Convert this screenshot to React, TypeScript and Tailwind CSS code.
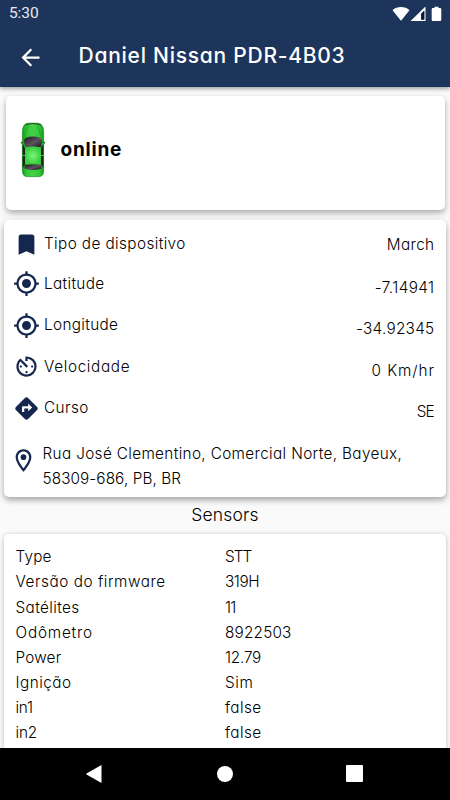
import React from "react";
import { MdArrowBack, MdAvTimer, MdBookmark, MdDirections, MdGpsFixed } from "react-icons/md";
import type { IconType } from "react-icons";

const details: {
  icon: IconType;
  label: string;
  value: string;
  row: string;
  labelTracking: string;
  valueTracking: string;
  valueOffset: string;
}[] = [
  { icon: MdBookmark, label: "Tipo de dispositivo", value: "March", row: "h-[38px]", labelTracking: "tracking-[0.4px]", valueTracking: "tracking-[0.4px]", valueOffset: "pt-[2px]" },
  { icon: MdGpsFixed, label: "Latitude", value: "-7.14941", row: "h-[41.5px]", labelTracking: "tracking-[0.35px]", valueTracking: "tracking-[0.4px]", valueOffset: "pt-[9px]" },
  { icon: MdGpsFixed, label: "Longitude", value: "-34.92345", row: "h-[41.5px]", labelTracking: "tracking-[0.35px]", valueTracking: "tracking-[0.3px]", valueOffset: "pt-[8px]" },
  { icon: MdAvTimer, label: "Velocidade", value: "0 Km/hr", row: "h-[41.5px]", labelTracking: "tracking-[0.65px]", valueTracking: "tracking-[0.95px] -mr-[0.5px]", valueOffset: "pt-[9px]" },
  { icon: MdDirections, label: "Curso", value: "SE", row: "h-[41.5px]", labelTracking: "tracking-[0.45px]", valueTracking: "tracking-[-1px] mr-px", valueOffset: "pt-[8px]" },
];

const sensors: { name: string; value: string; nameTracking: string; valueTracking: string }[] = [
  { name: "Type", value: "STT", nameTracking: "tracking-[0.2px]", valueTracking: "tracking-[-0.9px]" },
  { name: "Versão do firmware", value: "319H", nameTracking: "tracking-[0.55px]", valueTracking: "tracking-[-0.4px]" },
  { name: "Satélites", value: "11", nameTracking: "tracking-[0.4px]", valueTracking: "tracking-[-0.8px]" },
  { name: "Odômetro", value: "8922503", nameTracking: "tracking-[0.8px]", valueTracking: "tracking-[0.2px]" },
  { name: "Power", value: "12.79", nameTracking: "tracking-[0.2px]", valueTracking: "tracking-[-0.2px]" },
  { name: "Ignição", value: "Sim", nameTracking: "tracking-[0.5px]", valueTracking: "tracking-[0.6px]" },
  { name: "in1", value: "false", nameTracking: "tracking-[-0.2px]", valueTracking: "tracking-[0.4px]" },
  { name: "in2", value: "false", nameTracking: "tracking-[-0.1px]", valueTracking: "tracking-[0.4px]" },
];

function StatusBar() {
  return (
    <div className="flex h-[27px] items-center justify-between pl-[9px] pr-2">
      <span className="pt-px font-['Roboto',sans-serif] text-[15.500px] font-normal leading-none tracking-[-0.1px] text-white/90">
        5:30
      </span>
      <svg width="50" height="16" viewBox="0 0 50 16" fill="currentColor">
        <path d="M0.500 4.200C5 0 13 0 17.500 4.200L9 14.800Z" />
        <path fillRule="evenodd" d="M33.500 .5V15H18.600ZM32.500 4.500L29 8V13.800H32.500Z" />
        <path fill="#0c1440" d="M29.600 7.200L32 4.800V13.400H29.600Z" />
        <path d="M42.500 .8h4v1.200h1.600q1.200 0 1.200 1.200v10.600q0 1.200-1.200 1.200h-7.200q-1.200 0-1.200-1.200v-10.600q0-1.200 1.200-1.200h1.600z" />
      </svg>
    </div>
  );
}

function Pin() {
  return (
    <svg className="-ml-[3px] mt-[5.500px] text-[#15264f]" width="27" height="27" viewBox="0 0 24 24" fill="currentColor">
      <path d="M12 2C8.130 2 5 5.130 5 9c0 5.250 7 13 7 13s7-7.750 7-13c0-3.870-3.130-7-7-7zM7 9c0-2.760 2.240-5 5-5s5 2.240 5 5c0 2.880-2.880 7.190-5 9.880C9.920 16.210 7 11.850 7 9z" />
      <circle cx="12" cy="9" r="2.500" />
    </svg>
  );
}

function Car() {
  return (
    <svg width="26" height="56" viewBox="0 0 26 56">
      <defs>
        <linearGradient id="body" x1="0" x2="1" y1="0" y2="0">
          <stop offset="0" stopColor="#159a1c" />
          <stop offset=".2" stopColor="#35c83a" />
          <stop offset=".5" stopColor="#44d148" />
          <stop offset=".8" stopColor="#35c83a" />
          <stop offset="1" stopColor="#159a1c" />
        </linearGradient>
        <radialGradient id="roof">
          <stop offset="0" stopColor="#7bf57c" />
          <stop offset="1" stopColor="#37cf3d" />
        </radialGradient>
        <linearGradient id="glass" x1="0" x2="1" y1="0" y2="1">
          <stop offset="0" stopColor="#1c141c" />
          <stop offset=".55" stopColor="#5c545c" />
          <stop offset="1" stopColor="#151015" />
        </linearGradient>
      </defs>
      <path d="M3 19L.8 20.2v1.6L3 21zM23 19l2.2 1.2v1.6L23 21z" fill="#176e1b" />
      <path d="M2.400 10Q2.600 1.500 8 1.200h10q5.400.3 5.600 8.800v38q0 6.300-4 6.600H6.400q-4-.3-4-6.600z" fill="url(#body)" stroke="#128a18" strokeWidth=".7" />
      <path d="M5 3.300Q13-.2 21 3.300" fill="none" stroke="#174f19" strokeWidth="1" />
      <path d="M8 4L4.500 16M18 4L21.500 16" stroke="#1f9a26" strokeWidth=".8" />
      <path d="M2.600 22l2.600 4.500v15.500l-2.600 4zM23.400 22l-2.600 4.500v15.500l2.600 4z" fill="#1b251c" />
      <path d="M2.200 33.500h3.500M20.300 33.500h3.500" stroke="#35c83a" />
      <path d="M3.800 18.500Q5 14.500 13 14.500t9.200 4L20.800 25.500Q13 23.500 5.200 25.500z" fill="url(#glass)" />
      <path d="M5 25.500Q13 24 21 25.500V42.500H5z" fill="url(#roof)" />
      <path d="M4.800 42.700Q13 41.800 21.200 42.700L21.700 46.500Q13 49.500 4.300 46.500z" fill="url(#glass)" />
    </svg>
  );
}

export default function App() {
  return (
    <div className="flex h-[800px] w-[450px] flex-col overflow-hidden bg-[#fafafa] font-['Inter','Noto_Sans',sans-serif] text-[15.3px] font-light text-black [font-feature-settings:'cv11','calt'_0]">
      <header className="z-10 h-[87px] shrink-0 bg-[#1e355b] text-white shadow-[0_2px_4px_rgba(0,0,0,0.35)]">
        <StatusBar />
        <div className="flex h-[60px] items-center pl-[17px]">
          <MdArrowBack size={27} />
          <h1 className="ml-[34.500px] whitespace-nowrap pb-[3px] text-[21px] font-medium leading-none tracking-[0.75px]">
            Daniel Nissan PDR-4B03
          </h1>
        </div>
      </header>

      <main className="flex min-h-0 grow flex-col overflow-hidden">
        <section className="mx-[5.500px] mt-[8.500px] flex h-[114.500px] shrink-0 items-center rounded-[5px] bg-white pb-[6px] pl-[14px] shadow-[0_3px_6px_rgba(0,0,0,0.32)]">
          <Car />
          <span className="ml-[15px] text-[19px] font-bold leading-none tracking-[0.8px]">online</span>
        </section>

        <section className="mx-1 mt-[10px] flex h-[277px] shrink-0 flex-col rounded-[5px] bg-white pl-[9px] pr-[11.500px] pt-[5px] shadow-[0_3px_6px_rgba(0,0,0,0.35)]">
          {details.map(({ icon: Icon, label, value, row, labelTracking, valueTracking, valueOffset }) => (
            <div key={label} className={`flex items-center justify-between ${row}`}>
              <div className="flex items-center">
                <Icon size={27} className="text-[#15264f]" />
                <span className={`ml-[4px] whitespace-nowrap pt-px ${labelTracking}`}>{label}</span>
              </div>
              <span className={`whitespace-nowrap ${valueTracking} ${valueOffset}`}>{value}</span>
            </div>
          ))}
          <div className="mt-[12px] flex items-start">
            <Pin />
            <p className="ml-[5.500px] whitespace-nowrap leading-[25px]">
              <span className="tracking-[0.36px]">Rua José Clementino, Comercial Norte, Bayeux,</span>
              <br />
              <span className="tracking-[0.1px]">58309-686, PB, BR</span>
            </p>
          </div>
        </section>

        <h2 className="mt-[5px] h-[32px] shrink-0 text-center text-[17.500px] font-light leading-[26px] tracking-[0.2px]">
          Sensors
        </h2>

        <section className="mx-1 flex shrink-0 flex-col rounded-t-[5px] bg-white pl-[11.500px] pt-[11px] shadow-[0_1px_5px_rgba(0,0,0,0.25)]">
          {sensors.map(({ name, value, nameTracking, valueTracking }) => (
            <div key={name} className="grid h-[25.200px] grid-cols-[209.500px_1fr] items-center">
              <span className={`whitespace-nowrap ${nameTracking}`}>{name}</span>
              <span className={`whitespace-nowrap ${valueTracking}`}>{value}</span>
            </div>
          ))}
          <div className="h-4" />
        </section>
      </main>

      <nav className="z-10 flex h-[52.500px] shrink-0 items-center justify-center bg-black text-white">
        <svg className="mr-[115px]" width="16" height="18" viewBox="0 0 16 18" fill="currentColor">
          <path d="M15.500.5v17Q15.500 18 15 17.800L.5 9.500Q0 9 .5 8.500L15 .2q.5-.2.5.3z" />
        </svg>
        <span className="size-4 rounded-full bg-white" />
        <span className="ml-[113px] mr-px size-[17px] rounded-[1px] bg-white" />
      </nav>
    </div>
  );
}
